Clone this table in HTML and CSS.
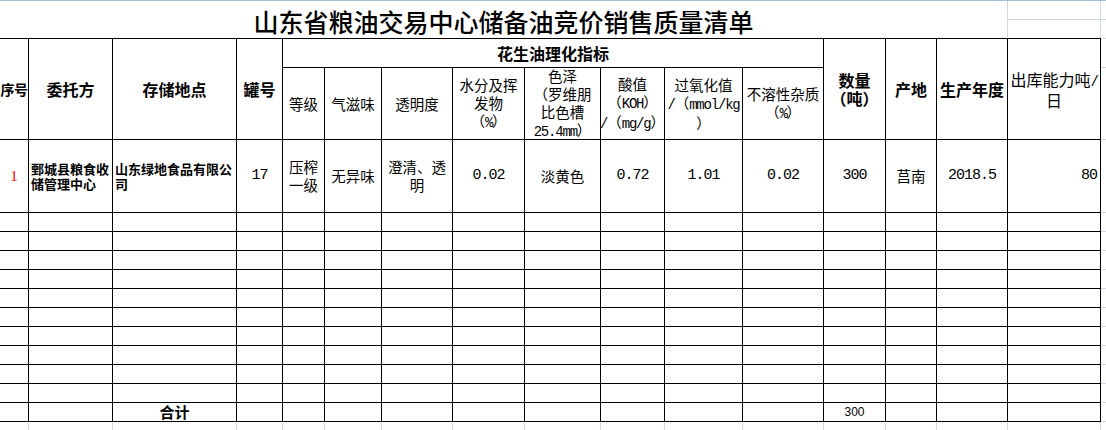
FILE: index.html
```html
<!DOCTYPE html>
<html lang="zh-CN">
<head>
<meta charset="utf-8">
<title>山东省粮油交易中心储备油竞价销售质量清单</title>
<link rel="stylesheet" href="styles.css">
</head>
<body>
<div class="title-row">
  <div class="title">山东省粮油交易中心储备油竞价销售质量清单</div>
  <div class="tc"></div><div class="tc"></div>
  <div class="tc"></div><div class="tc"></div>
</div>
<div class="sheet-wrap">
  <div class="sheet">
    <div class="c b r2 seq">序号</div>
    <div class="c b r2">委托方</div>
    <div class="c b r2">存储地点</div>
    <div class="c b r2">罐号</div>
    <div class="c b group">花生油理化指标</div>
    <div class="c b r2"><p class="t">数量<br>（吨）</p></div>
    <div class="c b r2">产地</div>
    <div class="c b r2">生产年度</div>
    <div class="c r2 big"><p class="t">出库能力吨<span class="a">/</span><br>日</p></div>

    <div class="c">等级</div>
    <div class="c">气滋味</div>
    <div class="c">透明度</div>
    <div class="c"><p class="t">水分及挥<br>发物<br>（<span class="a">%</span>）</p></div>
    <div class="c"><p class="t">色泽<br>（罗维朋<br>比色槽<br><span class="a">25.4mm</span>）</p></div>
    <div class="c"><p class="t">酸值<br>（<span class="a">KOH</span>）<br><span class="a">/</span>（<span class="a">mg/g</span>）</p></div>
    <div class="c"><p class="t">过氧化值<br><span class="a">/</span>（<span class="a">mmol/kg</span><br>）</p></div>
    <div class="c"><p class="t">不溶性杂质<br>（<span class="a">%</span>）</p></div>

    <div class="c red">1</div>
    <div class="c left org"><p class="t">鄄城县粮食收<br>储管理中心</p></div>
    <div class="c left org"><p class="t">山东绿地食品有限公<br>司</p></div>
    <div class="c num">17</div>
    <div class="c"><p class="t">压榨<br>一级</p></div>
    <div class="c">无异味</div>
    <div class="c"><p class="t">澄清、透<br>明</p></div>
    <div class="c num">0.02</div>
    <div class="c">淡黄色</div>
    <div class="c num">0.72</div>
    <div class="c num">1.01</div>
    <div class="c num">0.02</div>
    <div class="c num">300</div>
    <div class="c">莒南</div>
    <div class="c num">2018.5</div>
    <div class="c num right">80</div>

    <div class="c"></div><div class="c"></div><div class="c"></div><div class="c"></div><div class="c"></div><div class="c"></div><div class="c"></div><div class="c"></div><div class="c"></div><div class="c"></div><div class="c"></div><div class="c"></div><div class="c"></div><div class="c"></div><div class="c"></div><div class="c"></div>
    <div class="c"></div><div class="c"></div><div class="c"></div><div class="c"></div><div class="c"></div><div class="c"></div><div class="c"></div><div class="c"></div><div class="c"></div><div class="c"></div><div class="c"></div><div class="c"></div><div class="c"></div><div class="c"></div><div class="c"></div><div class="c"></div>
    <div class="c"></div><div class="c"></div><div class="c"></div><div class="c"></div><div class="c"></div><div class="c"></div><div class="c"></div><div class="c"></div><div class="c"></div><div class="c"></div><div class="c"></div><div class="c"></div><div class="c"></div><div class="c"></div><div class="c"></div><div class="c"></div>
    <div class="c"></div><div class="c"></div><div class="c"></div><div class="c"></div><div class="c"></div><div class="c"></div><div class="c"></div><div class="c"></div><div class="c"></div><div class="c"></div><div class="c"></div><div class="c"></div><div class="c"></div><div class="c"></div><div class="c"></div><div class="c"></div>
    <div class="c"></div><div class="c"></div><div class="c"></div><div class="c"></div><div class="c"></div><div class="c"></div><div class="c"></div><div class="c"></div><div class="c"></div><div class="c"></div><div class="c"></div><div class="c"></div><div class="c"></div><div class="c"></div><div class="c"></div><div class="c"></div>
    <div class="c"></div><div class="c"></div><div class="c"></div><div class="c"></div><div class="c"></div><div class="c"></div><div class="c"></div><div class="c"></div><div class="c"></div><div class="c"></div><div class="c"></div><div class="c"></div><div class="c"></div><div class="c"></div><div class="c"></div><div class="c"></div>
    <div class="c"></div><div class="c"></div><div class="c"></div><div class="c"></div><div class="c"></div><div class="c"></div><div class="c"></div><div class="c"></div><div class="c"></div><div class="c"></div><div class="c"></div><div class="c"></div><div class="c"></div><div class="c"></div><div class="c"></div><div class="c"></div>
    <div class="c"></div><div class="c"></div><div class="c"></div><div class="c"></div><div class="c"></div><div class="c"></div><div class="c"></div><div class="c"></div><div class="c"></div><div class="c"></div><div class="c"></div><div class="c"></div><div class="c"></div><div class="c"></div><div class="c"></div><div class="c"></div>
    <div class="c"></div><div class="c"></div><div class="c"></div><div class="c"></div><div class="c"></div><div class="c"></div><div class="c"></div><div class="c"></div><div class="c"></div><div class="c"></div><div class="c"></div><div class="c"></div><div class="c"></div><div class="c"></div><div class="c"></div><div class="c"></div>
    <div class="c"></div><div class="c"></div><div class="c"></div><div class="c"></div><div class="c"></div><div class="c"></div><div class="c"></div><div class="c"></div><div class="c"></div><div class="c"></div><div class="c"></div><div class="c"></div><div class="c"></div><div class="c"></div><div class="c"></div><div class="c"></div>

    <div class="c"></div><div class="c"></div><div class="c b total">合计</div><div class="c"></div><div class="c"></div><div class="c"></div><div class="c"></div><div class="c"></div><div class="c"></div><div class="c"></div><div class="c"></div><div class="c"></div><div class="c num sum">300</div><div class="c"></div><div class="c"></div><div class="c"></div>
  </div>
  <div class="edge">
    <div></div><div></div><div></div><div></div><div></div><div></div><div></div>
    <div></div><div></div><div></div><div></div><div></div><div></div><div></div>
  </div>
</div>
<div class="strip">
  <div></div><div></div><div></div><div></div><div></div><div></div><div></div><div></div><div></div>
  <div></div><div></div><div></div><div></div><div></div><div></div><div></div><div></div>
</div>
</body>
</html>
```

FILE: styles.css
```css
html, body {
  margin: 0;
  padding: 0;
  background: #fff;
}
body {
  width: 1106px;
  height: 430px;
  overflow: hidden;
  font-family: "Noto Sans CJK SC", sans-serif;
  color: #000;
  text-spacing-trim: space-all;
}

.title-row {
  display: grid;
  grid-template-columns: 1007px 92px 5px;
  grid-template-rows: 18px 18px;
  gap: 1px;
  background: #d0d7e5;
  border-top: 1px solid #a8bed6;
}
.title {
  grid-row: span 2;
  background: #fff;
  display: flex;
  align-items: center;
  justify-content: center;
  padding-top: 3px;
  font-size: 25px;
  line-height: 25px;
  font-weight: 500;
  white-space: nowrap;
}
.tc { background: #fff; }

.sheet-wrap {
  display: flex;
}
.sheet {
  display: grid;
  grid-template-columns: 28px 83px 123px 45px 41px 56px 70px 71px 75px 63px 77px 80px 61px 50px 70px 92px;
  grid-template-rows: 28px 71px 72px repeat(11, 18px);
  gap: 1px;
  background: #000;
  border-top: 1px solid #000;
  border-right: 1px solid #000;
  border-bottom: 1px solid #000;
}
.edge {
  display: grid;
  grid-template-columns: 5px;
  grid-template-rows: 28px 71px 72px repeat(11, 18px);
  row-gap: 1px;
  background: #d0d7e5;
  border-top: 1px solid #d0d7e5;
  border-bottom: 1px solid #d0d7e5;
}
.edge div { background: #fff; }

.strip {
  display: grid;
  grid-template-columns: 28px 83px 123px 45px 41px 56px 70px 71px 75px 63px 77px 80px 61px 50px 70px 92px 5px;
  column-gap: 1px;
  height: 8px;
  background: #d0d7e5;
}
.strip div { background: #fff; }

.c {
  background: #fff;
  display: flex;
  align-items: center;
  justify-content: center;
  text-align: center;
  white-space: nowrap;
  font-size: 14.5px;
  line-height: 18px;
  min-width: 0;
}
.t {
  margin: 0;
  flex: none;
}
.a {
  font-family: "Liberation Mono", monospace;
  font-size: 14px;
  letter-spacing: -1.2px;
}
.r2 { grid-row: span 2; }
.group { grid-column: span 8; }
.b {
  font-weight: 700;
  font-size: 16px;
}
.seq {
  font-size: 14px;
  letter-spacing: -0.5px;
}
.big { font-size: 16px; }
.total { font-size: 15px; }
.num {
  font-family: "Liberation Mono", monospace;
  font-size: 15px;
  letter-spacing: -1px;
}
.sum {
  font-family: "Liberation Sans", sans-serif;
  font-size: 12px;
  letter-spacing: 0;
}
.red {
  color: #f00;
  font-family: "Liberation Serif", serif;
  font-size: 15px;
}
.left {
  justify-content: flex-start;
  text-align: left;
  padding-left: 2px;
}
.org {
  font-weight: 700;
  font-size: 13px;
  line-height: 15px;
}
.right {
  justify-content: flex-end;
  padding-right: 3px;
}
```
